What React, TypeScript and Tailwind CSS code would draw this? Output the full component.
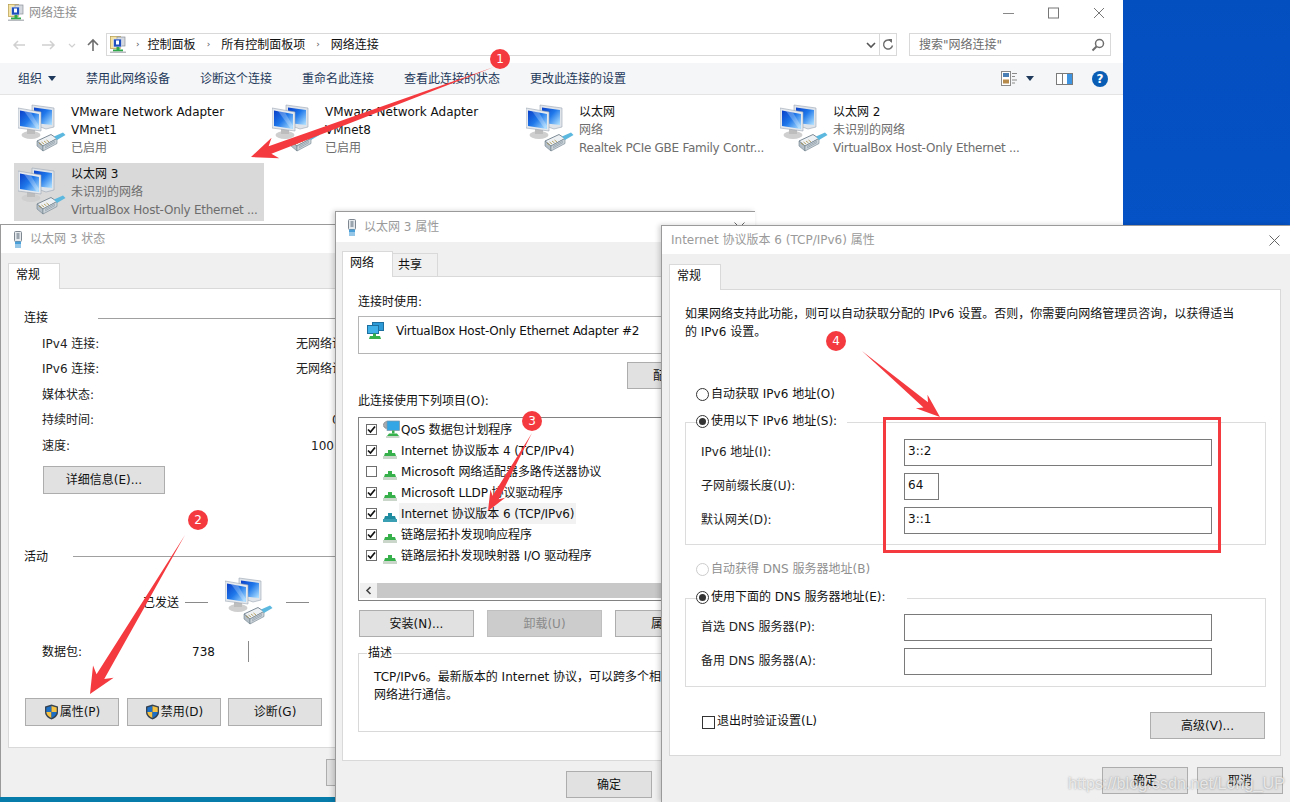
import React from "react";

type P = [number, number];

function arrowPoints(tail: P, tip: P, shaft: number, headW: number, headL: number) {
  const dx = tip[0] - tail[0];
  const dy = tip[1] - tail[1];
  const len = Math.hypot(dx, dy);
  const ux = dx / len;
  const uy = dy / len;
  const nx = -uy;
  const ny = ux;
  const at = (back: number, off: number): string =>
    `${tip[0] - ux * back + nx * off},${tip[1] - uy * back + ny * off}`;
  return [
    `${tail[0]},${tail[1]}`,
    at(headL * 0.78, shaft / 2),
    at(headL, headW / 2),
    `${tip[0]},${tip[1]}`,
    at(headL, -headW / 2),
    at(headL * 0.78, -shaft / 2),
  ].join(" ");
}

function NetIcon({ size = 48 }: { size?: number }) {
  return (
    <svg width={size} height={size} viewBox="0 0 48 48" className="shrink-0">
      <defs>
        <linearGradient id="scr" x1="0" y1="0" x2="1" y2="0.9">
          <stop offset="0" stopColor="#0a3fc8" />
          <stop offset="0.5" stopColor="#1f78ea" />
          <stop offset="1" stopColor="#a8dcff" />
        </linearGradient>
      </defs>
      <path d="M14 1 L36 4 L36 23 L28 25 L14 20 Z" fill="#dfe4ea" stroke="#9aa5b1" strokeWidth="0.6" />
      <path d="M16 3.5 L34 6 L34 21 L16 19 Z" fill="url(#scr)" />
      <ellipse cx="13" cy="31" rx="9.5" ry="4" fill="#cfcfcf" />
      <rect x="9" y="25" width="8" height="5" fill="#bdbdbd" />
      <path d="M0 4 L23 8 L23 27 L0 24 Z" fill="#e6eaee" stroke="#9aa5b1" strokeWidth="0.6" />
      <path d="M2 6.5 L21 10 L21 25 L2 22 Z" fill="url(#scr)" />
      <path d="M6 7 L13 8.5 L21 22 L19 25 Z" fill="#ffffff" opacity="0.25" />
      <path d="M19 37 L33 30.5 L39 34.5 L25 42 Z" fill="#eef1f3" stroke="#6f7f8b" strokeWidth="0.9" />
      <path d="M19 37 L19 42 L25 47 L25 42 Z" fill="#b4bec6" stroke="#6f7f8b" strokeWidth="0.6" />
      <path d="M25 42 L25 47 L39 39.5 L39 34.5 Z" fill="#ccd4da" stroke="#6f7f8b" strokeWidth="0.6" />
      <path d="M27 44 L37 38.5 M27 42.5 L37 37" stroke="#8a98a3" strokeWidth="0.7" />
      <path d="M21 39 L23.5 41 M23.5 38 L26 40 M26 37 L28.5 39 M28.5 36 L31 38" stroke="#a88f45" strokeWidth="0.8" />
      <path d="M36 32.5 L45 28.5 L47.5 31 L39 36 Z" fill="#5cb8de" />
    </svg>
  );
}

function PlugIcon() {
  return (
    <svg width="10" height="17" viewBox="0 0 10 17" className="shrink-0">
      <rect x="1.5" y="0.5" width="7" height="10" rx="1" fill="#e6e9ec" stroke="#7e8790" />
      <rect x="3.5" y="2" width="3" height="6" fill="#9aa4ad" />
      <rect x="2" y="10.5" width="6" height="2.5" fill="#49a0d8" />
      <path d="M3 13 V17 M5 13 V17 M7 13 V17" stroke="#2f8ed0" strokeWidth="1" />
    </svg>
  );
}

function FolderNetIcon() {
  return (
    <svg width="16" height="17" viewBox="0 0 16 17" className="shrink-0">
      <rect x="0.5" y="0.5" width="10" height="12" fill="#f4e3a3" stroke="#b59b4a" strokeWidth="0.7" />
      <rect x="7" y="1" width="8" height="9" fill="#d5d9df" stroke="#8a8f98" strokeWidth="0.7" />
      <rect x="3.5" y="3" width="8" height="8" fill="#1f4fbf" stroke="#dfe5ee" strokeWidth="0.7" />
      <rect x="6" y="4.5" width="3" height="4" fill="#ffffff" />
      <rect x="6.5" y="11" width="3" height="3" fill="#2fa84a" />
      <rect x="3" y="13.5" width="10" height="2" fill="#2fa84a" />
      <rect x="0" y="15.5" width="16" height="1.5" fill="#b8bcc0" />
    </svg>
  );
}

function Shield() {
  return (
    <svg width="15" height="16" viewBox="0 0 15 16" className="shrink-0">
      <path d="M7.5 0.5 L14 2.5 V8 C14 12 10.5 14.5 7.5 15.5 C4.5 14.5 1 12 1 8 V2.5 Z" fill="#36424f" />
      <path d="M7.5 2 L2.3 3.5 V8 H7.5 Z" fill="#1c6fc4" />
      <path d="M7.5 2 L12.7 3.5 V8 H7.5 Z" fill="#f6c244" />
      <path d="M2.3 8 C2.5 11 5 13 7.5 14 V8 Z" fill="#f6c244" />
      <path d="M12.7 8 C12.5 11 10 13 7.5 14 V8 Z" fill="#1c6fc4" />
    </svg>
  );
}

function ProtoIcon({ teal = false }: { teal?: boolean }) {
  const main = teal ? "#1f8ca0" : "#35b04a";
  return (
    <svg width="14" height="9" viewBox="0 0 14 9" className="shrink-0 mt-[7px]">
      <path d="M5 0 H9 V3 H12 L13 6 H1 L2 3 H5 Z" fill={main} />
      <rect x="0" y="6" width="14" height="3" fill={teal ? "#3b9fb3" : "#c9d6c9"} />
    </svg>
  );
}

function QosIcon() {
  return (
    <svg width="17" height="19" viewBox="0 0 17 19" className="shrink-0">
      <circle cx="4" cy="5" r="3.5" fill="#a8adb2" stroke="#7c8186" strokeDasharray="1.4 0.8" />
      <rect x="4" y="1" width="12.5" height="9.5" fill="#33a6e6" stroke="#7d94a6" strokeWidth="0.7" />
      <rect x="9" y="10.5" width="2.5" height="3" fill="#35b04a" />
      <path d="M4 16 L6 13.5 H14 L16 16 Z" fill="#35b04a" />
      <rect x="3" y="16" width="13.5" height="2" fill="#c9d6c9" />
    </svg>
  );
}

function AdapterIcon() {
  return (
    <svg width="17" height="17" viewBox="0 0 17 17" className="shrink-0">
      <rect x="5.5" y="0.5" width="11" height="8" fill="#2c9ad6" stroke="#1c6f9f" />
      <rect x="0.5" y="3.5" width="11" height="8" fill="#3fb0e8" stroke="#1c6f9f" />
      <rect x="6" y="11.5" width="3" height="2.5" fill="#35b04a" />
      <path d="M2 17 L3 14 H13 L14 17 Z" fill="#35b04a" />
    </svg>
  );
}

function Check({ on = true }: { on?: boolean }) {
  return (
    <div className="w-[11px] h-[11px] border border-[#6e6e6e] bg-white shrink-0 flex items-center justify-center">
      {on && (
        <svg width="9" height="9" viewBox="0 0 9 9">
          <path d="M1 4.5 L3.5 7 L8 1.5" fill="none" stroke="#111" strokeWidth="1.7" />
        </svg>
      )}
    </div>
  );
}

function Radio({ on = false, dim = false }: { on?: boolean; dim?: boolean }) {
  return (
    <div
      className={`w-[13px] h-[13px] rounded-full border bg-white shrink-0 flex items-center justify-center ${
        dim ? "border-[#cccccc]" : "border-[#333333]"
      }`}
    >
      {on && <div className="w-[7px] h-[7px] rounded-full bg-[#333333]" />}
    </div>
  );
}

function Btn({
  w,
  h = 27,
  disabled = false,
  className = "",
  children,
}: {
  w: string;
  h?: number;
  disabled?: boolean;
  className?: string;
  children: React.ReactNode;
}) {
  return (
    <div
      style={{ height: h }}
      className={`${w} shrink-0 flex items-center justify-center gap-[1px] border whitespace-nowrap ${
        disabled ? "bg-[#cccccc] border-[#bfbfbf] text-[#8a8a8a]" : "bg-[#e1e1e1] border-[#adadad] text-[#111111]"
      } ${className}`}
    >
      {children}
    </div>
  );
}

function TitleBar({ h, children }: { h: string; children: React.ReactNode }) {
  return <div className={`${h} bg-white flex items-center text-[#9a9a9a]`}>{children}</div>;
}

function Tab({ active = false, w, children }: { active?: boolean; w: string; children: React.ReactNode }) {
  return (
    <div
      className={`${w} flex items-center border border-b-0 border-[#d9d9d9] ${
        active ? "h-[26px] bg-white -mb-px pl-[7px] pb-[3px] relative z-10" : "h-[23px] bg-[#f0f0f0] pl-[5px] border-l-0"
      }`}
    >
      {children}
    </div>
  );
}

function ExplorerItem({
  title,
  l2,
  l3,
  selected = false,
}: {
  title: string[];
  l2: string;
  l3?: string;
  selected?: boolean;
}) {
  return (
    <div className={`h-[58px] flex pl-[4px] ${selected ? "bg-[#d9d9d9]" : ""}`}>
      <div className="pt-[4px]">
        <NetIcon />
      </div>
      <div className={`pl-[5px] leading-[18px] whitespace-nowrap ${selected ? "pt-[2px]" : "pt-[3px]"}`}>
        {title.map((t) => (
          <div key={t} className="text-[#111111]">
            {t}
          </div>
        ))}
        <div className="text-[#6d6d6d]">{l2}</div>
        {l3 && <div className="text-[#6d6d6d] tracking-[-0.27px]">{l3}</div>}
      </div>
    </div>
  );
}

function StatRow({ label, value, w }: { label: string; value?: string; w?: string }) {
  return (
    <div className="h-[25.5px] flex items-center whitespace-nowrap text-[#222222]">
      <div className={`${w ?? "w-[254px]"} shrink-0`}>{label}</div>
      {value && <div className="shrink-0">{value}</div>}
    </div>
  );
}

function ProtoRow({
  label,
  on = true,
  icon,
  sel = false,
}: {
  label: string;
  on?: boolean;
  icon: React.ReactNode;
  sel?: boolean;
}) {
  return (
    <div className="h-[21px] flex items-center pl-[7px] whitespace-nowrap">
      <Check on={on} />
      <div className="w-[24px] pl-[6px] flex justify-start shrink-0">{icon}</div>
      <div className={`h-[21px] flex items-center pl-[2px] pr-[2px] -ml-[2px] tracking-[-0.1px] ${sel ? "bg-[#f2f2f2]" : ""}`}>
        {label}
      </div>
    </div>
  );
}

function Field({ label, value, w = "w-[308px]" }: { label: string; value?: string; w?: string }) {
  return (
    <div className="h-[27px] flex items-center whitespace-nowrap">
      <div className="w-[218px] shrink-0 pl-[15px] pb-[2px] text-[#222222]">{label}</div>
      <div className={`${w} h-[27px] border border-[#7a7a7a] bg-white flex items-center pl-[3px] pb-[3px]`}>
        {value}
      </div>
    </div>
  );
}

export default function App() {
  const arrows: { tail: P; tip: P; shaft: number; headW: number; headL: number }[] = [
    { tail: [494, 67], tip: [251, 157], shaft: 8, headW: 22, headL: 26 },
    { tail: [185, 535], tip: [90, 694], shaft: 9, headW: 24, headL: 26 },
    { tail: [532, 433], tip: [488, 511], shaft: 7, headW: 17, headL: 20 },
    { tail: [862, 351], tip: [940, 417], shaft: 7, headW: 18, headL: 24 },
  ];
  const badges: { x: string; n: string }[] = [
    { x: "left-[490px] top-[49px]", n: "1" },
    { x: "left-[188px] top-[510px]", n: "2" },
    { x: "left-[522px] top-[411px]", n: "3" },
    { x: "left-[826px] top-[331px]", n: "4" },
  ];

  return (
    <div className="relative w-[1290px] h-[802px] overflow-hidden bg-gradient-to-b from-[#044fc0] to-[#0559d2] text-[12px] text-[#111111] font-['DejaVu_Sans','Noto_Sans_CJK_SC',sans-serif]">
      {/* lower-left desktop */}
      <div className="absolute left-0 top-[630px] w-[340px] h-[172px] bg-[#067cab]" />

      {/* Explorer window */}
      <div className="absolute left-0 top-0 w-[1123px] h-[225px] bg-white overflow-hidden flex flex-col">
        <div className="h-[25px] flex items-center pl-[8px] shrink-0">
          <FolderNetIcon />
          <span className="ml-[5px] text-[#8f8f8f]">网络连接</span>
          <div className="ml-auto flex items-center pr-[18px]">
            <svg width="102" height="12" viewBox="0 0 102 12">
              <path d="M0 6.5 H11" stroke="#888" />
              <rect x="45.5" y="1" width="10" height="10" fill="none" stroke="#777" />
              <path d="M91 1 L101 11 M101 1 L91 11" stroke="#777" />
            </svg>
          </div>
        </div>
        <div className="h-[23px] mt-[8px] flex items-center shrink-0">
          <div className="w-[106px] pl-[12px] flex shrink-0">
            <svg width="90" height="16" viewBox="0 0 90 16">
              <path d="M13 8 H2 M6 4 L2 8 L6 12" fill="none" stroke="#d0d0d0" strokeWidth="1.5" />
              <path d="M30 8 H42 M38 4 L42 8 L38 12" fill="none" stroke="#d0d0d0" strokeWidth="1.5" />
              <path d="M57 7 L60 10 L63 7" fill="none" stroke="#d0d0d0" strokeWidth="1.2" />
              <path d="M81 14 V3 M76 8 L81 3 L86 8" fill="none" stroke="#6d6d6d" strokeWidth="1.6" />
            </svg>
          </div>
          <div className="w-[791px] h-[23px] border border-[#d9d9d9] flex items-center shrink-0">
            <div className="pl-[3px] flex">
              <FolderNetIcon />
            </div>
            <span className="ml-[10px] mr-[8px] text-[9px] text-[#555555]">›</span>
            <span>控制面板</span>
            <span className="mx-[11px] text-[9px] text-[#555555]">›</span>
            <span>所有控制面板项</span>
            <span className="mx-[11px] text-[9px] text-[#555555]">›</span>
            <span>网络连接</span>
            <div className="ml-auto flex items-center h-full">
              <svg width="12" height="8" viewBox="0 0 12 8" className="mr-[2px]">
                <path d="M2 2 L6 6 L10 2" fill="none" stroke="#555" strokeWidth="1.6" />
              </svg>
              <div className="w-[17px] h-full border-l border-[#d9d9d9] flex items-center justify-center">
                <svg width="12" height="13" viewBox="0 0 12 13">
                  <path d="M9.5 3.5 A4.5 4.5 0 1 0 10.5 7.5" fill="none" stroke="#6d6d6d" strokeWidth="1.4" />
                  <path d="M6 1 L10 1 L10 5 Z" fill="#6d6d6d" />
                </svg>
              </div>
            </div>
          </div>
          <div className="ml-[12px] w-[202px] h-[23px] border border-[#d9d9d9] flex items-center pl-[9px] pr-[5px] text-[#6d6d6d] shrink-0">
            <span>搜索"网络连接"</span>
            <svg width="14" height="14" viewBox="0 0 14 14" className="ml-auto">
              <circle cx="8.5" cy="5.5" r="4" fill="none" stroke="#6d6d6d" strokeWidth="1.5" />
              <path d="M5.5 8.5 L1.5 12.5" stroke="#6d6d6d" strokeWidth="2" />
            </svg>
          </div>
        </div>
        <div className="h-[32px] mt-[7px] bg-[#f5f6f7] border-b border-[#e4e4e4] flex items-center pl-[18px] text-[#1e395b] whitespace-nowrap shrink-0">
          <span>组织</span>
          <svg width="8" height="5" viewBox="0 0 8 5" className="ml-[6px]">
            <path d="M0 0 H8 L4 5 Z" fill="#1e395b" />
          </svg>
          <span className="ml-[30px]">禁用此网络设备</span>
          <span className="ml-[30px]">诊断这个连接</span>
          <span className="ml-[30px]">重命名此连接</span>
          <span className="ml-[30px]">查看此连接的状态</span>
          <span className="ml-[30px]">更改此连接的设置</span>
          <div className="ml-auto flex items-center pr-[15px]">
            <svg width="16" height="15" viewBox="0 0 16 15">
              <rect x="0.5" y="0.5" width="9" height="14" fill="#fff" stroke="#8a8a8a" />
              <rect x="2" y="2" width="6" height="4" fill="#4a7fb5" />
              <rect x="2" y="8.5" width="6" height="4" fill="#b58a4a" />
              <path d="M11 2.5 H16 M11 5.5 H14 M11 9 H16 M11 12 H14" stroke="#8a8a8a" />
            </svg>
            <svg width="8" height="5" viewBox="0 0 8 5" className="ml-[9px]">
              <path d="M0 0 H8 L4 5 Z" fill="#1e395b" />
            </svg>
            <svg width="17" height="12" viewBox="0 0 17 12" className="ml-[22px]">
              <rect x="0.5" y="0.5" width="16" height="11" fill="#fff" stroke="#7a7a7a" />
              <rect x="6" y="1" width="1" height="10" fill="#7a7a7a" />
              <rect x="11" y="1" width="5" height="10" fill="#3e94e0" />
            </svg>
            <div className="ml-[19px] w-[16px] h-[16px] rounded-full bg-[#0a5db5] text-white font-bold text-[12px] leading-none flex items-center justify-center">
              ?
            </div>
          </div>
        </div>
        <div className="pt-[5px] pl-[14px] grid grid-cols-[250px_250px_250px_250px] gap-x-[4px] gap-y-[5px]">
          <ExplorerItem title={["VMware Network Adapter", "VMnet1"]} l2="已启用" />
          <ExplorerItem title={["VMware Network Adapter", "VMnet8"]} l2="已启用" />
          <ExplorerItem title={["以太网"]} l2="网络" l3="Realtek PCIe GBE Family Contr..." />
          <ExplorerItem title={["以太网 2"]} l2="未识别的网络" l3="VirtualBox Host-Only Ethernet ..." />
          <ExplorerItem title={["以太网 3"]} l2="未识别的网络" l3="VirtualBox Host-Only Ethernet ..." selected />
        </div>
      </div>

      {/* Status window */}
      <div className="absolute left-0 top-[224px] w-[336px] h-[573px] bg-[#f0f0f0] border-t border-l border-[#9a9a9a] overflow-hidden flex flex-col">
        <TitleBar h="h-[28px] shrink-0">
          <div className="ml-[12px] mr-[7px] flex">
            <PlugIcon />
          </div>
          <span>以太网 3 状态</span>
        </TitleBar>
        <div className="pt-[10px] pl-[7px] flex shrink-0">
          <Tab active w="w-[52px]">
            常规
          </Tab>
        </div>
        <div className="ml-[7px] w-[360px] h-[460px] bg-white border border-[#d9d9d9] shrink-0 pl-[15px]">
          <div className="mt-[20px] h-[18px] flex items-center">
            <span className="w-[74px] shrink-0">连接</span>
            <div className="flex-1 h-px bg-[#a0a0a0]" />
          </div>
          <div className="mt-[4px] pl-[18px]">
            <StatRow label="IPv4 连接:" value="无网络访问权限" />
            <StatRow label="IPv6 连接:" value="无网络访问权限" />
            <StatRow label="媒体状态:" />
            <StatRow label="持续时间:" value="00:08:12" w="w-[290px]" />
            <StatRow label="速度:" value="100.0 Mbps" w="w-[269px]" />
            <Btn w="w-[122px]" h={28} className="mt-[7px] ml-[1px]">
              详细信息(E)...
            </Btn>
          </div>
          <div className="mt-[54px] h-[18px] flex items-center">
            <span className="w-[49px] shrink-0">活动</span>
            <div className="flex-1 h-px bg-[#a0a0a0]" />
          </div>
          <div className="pl-[119px] mt-[11px] flex items-center h-[48px]">
            <span className="w-[42px] shrink-0 pt-[4px]">已发送</span>
            <div className="w-[23px] h-px bg-[#8a8a8a] mt-[4px]" />
            <div className="ml-[17px]">
              <NetIcon />
            </div>
            <div className="ml-[13px] w-[23px] h-px bg-[#8a8a8a] mt-[4px]" />
          </div>
          <div className="pl-[18px] mt-[15px] flex items-center h-[24px]">
            <span className="w-[150px] shrink-0">数据包:</span>
            <span className="w-[56px] shrink-0">738</span>
            <div className="w-px h-[21px] bg-[#8a8a8a]" />
          </div>
          <div className="mt-[34px] flex gap-[8px] pl-[1px]">
            <Btn w="w-[94px]" h={28}>
              <Shield />
              属性(P)
            </Btn>
            <Btn w="w-[94px]" h={28}>
              <Shield />
              禁用(D)
            </Btn>
            <Btn w="w-[94px]" h={28} className="-ml-[1px]">
              诊断(G)
            </Btn>
          </div>
        </div>
        <div className="flex justify-end mt-[11px]">
          <div className="w-[10px] h-[27px] bg-[#e1e1e1] border border-[#adadad]" />
        </div>
      </div>

      {/* Properties window */}
      <div className="absolute left-[335px] top-[211px] w-[420px] h-[591px] bg-[#f0f0f0] border-t border-l border-[#9a9a9a] shadow-[-2px_0_5px_rgba(0,0,0,0.18)] flex flex-col overflow-hidden">
        <div className="h-[30px] bg-white flex items-center text-[#9a9a9a] shrink-0">
          <div className="ml-[11px] mr-[7px] flex">
            <PlugIcon />
          </div>
          <span>以太网 3 属性</span>
          <svg width="11" height="11" viewBox="0 0 11 11" className="ml-auto mr-[10px]">
            <path d="M0.5 0.5 L10.5 10.5 M10.5 0.5 L0.5 10.5" stroke="#666" />
          </svg>
        </div>
        <div className="pt-[9px] pl-[6px] flex items-end shrink-0 h-[34px]">
          <Tab active w="w-[51px]">
            网络
          </Tab>
          <Tab w="w-[45px]">共享</Tab>
        </div>
        <div className="ml-[6px] w-[500px] h-[485px] bg-white border border-[#d9d9d9] shrink-0 pl-[15px]">
          <div className="mt-[16px] h-[18px] leading-[18px]">连接时使用:</div>
          <div className="mt-[5px] w-[400px] h-[38px] border border-[#b5b5b5] flex items-start pt-[5px] pl-[8px]">
            <AdapterIcon />
            <span className="ml-[12px] leading-[18px] tracking-[-0.25px] whitespace-nowrap">
              VirtualBox Host-Only Ethernet Adapter #2
            </span>
          </div>
          <div className="mt-[8px] pl-[269px]">
            <Btn w="w-[114px]" className="!justify-start pl-[25px]">
              配置(C)...
            </Btn>
          </div>
          <div className="mt-[3px] h-[18px] leading-[18px]">此连接使用下列项目(O):</div>
          <div className="mt-[7px] w-[400px] h-[184px] border border-[#828282] pt-[1px] flex flex-col">
            <ProtoRow label="QoS 数据包计划程序" icon={<QosIcon />} />
            <ProtoRow label="Internet 协议版本 4 (TCP/IPv4)" icon={<ProtoIcon />} />
            <ProtoRow label="Microsoft 网络适配器多路传送器协议" on={false} icon={<ProtoIcon />} />
            <ProtoRow label="Microsoft LLDP 协议驱动程序" icon={<ProtoIcon />} />
            <ProtoRow label="Internet 协议版本 6 (TCP/IPv6)" icon={<ProtoIcon teal />} sel />
            <ProtoRow label="链路层拓扑发现响应程序" icon={<ProtoIcon />} />
            <ProtoRow label="链路层拓扑发现映射器 I/O 驱动程序" icon={<ProtoIcon />} />
            <div className="mt-auto mb-[2px] mx-[1px] h-[15px] bg-[#c8c8c8] flex">
              <div className="w-[17px] h-full bg-[#f0f0f0] flex items-center justify-center">
                <svg width="7" height="9" viewBox="0 0 7 9">
                  <path d="M5.5 1 L2 4.5 L5.5 8" fill="none" stroke="#444" strokeWidth="1.6" />
                </svg>
              </div>
            </div>
          </div>
          <div className="mt-[9px] flex gap-[13px] pl-[1px]">
            <Btn w="w-[115px]">安装(N)...</Btn>
            <Btn w="w-[115px]" disabled>
              卸载(U)
            </Btn>
            <Btn w="w-[115px]" className="!justify-start pl-[35px]">
              属性(R)
            </Btn>
          </div>
          <div className="mt-[16px] w-[400px] h-[79px] border border-[#d9d9d9] pl-[15px]">
            <div className="-mt-[9px] -ml-[7px] w-fit bg-white px-[1px] leading-[16px]">描述</div>
            <div className="mt-[7px] leading-[18px] whitespace-nowrap">
              <div>TCP/IPv6。最新版本的 Internet 协议，可以跨多个相互连接的</div>
              <div>网络进行通信。</div>
            </div>
          </div>
        </div>
        <div className="pl-[230px] mt-[10px] flex gap-[9px] shrink-0">
          <Btn w="w-[86px]">确定</Btn>
        </div>
      </div>

      {/* IPv6 window */}
      <div className="absolute left-[661px] top-[225px] w-[629px] h-[577px] bg-[#f0f0f0] border-t border-l border-[#9a9a9a] shadow-[-2px_0_5px_rgba(0,0,0,0.18)] flex flex-col">
        <div className="h-[28px] bg-white flex items-center text-[#9a9a9a] shrink-0 pl-[9px]">
          <span>Internet 协议版本 6 (TCP/IPv6) 属性</span>
          <svg width="11" height="11" viewBox="0 0 11 11" className="ml-auto mr-[10px]">
            <path d="M0.5 0.5 L10.5 10.5 M10.5 0.5 L0.5 10.5" stroke="#666" />
          </svg>
        </div>
        <div className="pt-[10px] pl-[7px] flex shrink-0">
          <Tab active w="w-[52px]">
            常规
          </Tab>
        </div>
        <div className="ml-[7px] w-[612px] h-[467px] bg-white border border-[#d9d9d9] shrink-0 px-[15px]">
          <div className="pt-[15px] leading-[18px] whitespace-nowrap">
            <div>如果网络支持此功能，则可以自动获取分配的 IPv6 设置。否则，你需要向网络管理员咨询，以获得适当</div>
            <div>的 IPv6 设置。</div>
          </div>
          <div className="mt-[44px] h-[18px] flex items-center pl-[11px] gap-[2px]">
            <Radio />
            <span>自动获取 IPv6 地址(O)</span>
          </div>
          <div className="mt-[19px] w-[581px] h-[123px] border border-[#dcdcdc]">
            <div className="-mt-[11px] ml-[10px] w-fit h-[18px] flex items-center gap-[2px] bg-white pr-[10px]">
              <Radio on />
              <span>使用以下 IPv6 地址(S):</span>
            </div>
            <div className="mt-[9px] flex flex-col gap-[7px]">
              <Field label="IPv6 地址(I):" value="3::2" />
              <Field label="子网前缀长度(U):" value="64" w="w-[35px]" />
              <Field label="默认网关(D):" value="3::1" />
            </div>
          </div>
          <div className="mt-[15px] h-[18px] flex items-center pl-[11px] gap-[2px] text-[#8f8f8f]">
            <Radio dim />
            <span>自动获得 DNS 服务器地址(B)</span>
          </div>
          <div className="mt-[20px] w-[581px] h-[89px] border border-[#dcdcdc]">
            <div className="-mt-[11px] ml-[10px] w-fit h-[18px] flex items-center gap-[2px] bg-white pr-[22px]">
              <Radio on />
              <span>使用下面的 DNS 服务器地址(E):</span>
            </div>
            <div className="mt-[8px] flex flex-col gap-[7px]">
              <Field label="首选 DNS 服务器(P):" />
              <Field label="备用 DNS 服务器(A):" />
            </div>
          </div>
          <div className="mt-[25px] flex items-start pl-[17px] pr-0 w-[580px]">
            <div className="w-[13px] h-[13px] border border-[#333333] bg-white shrink-0 mt-[4px]" />
            <span className="ml-[2px] leading-[18px]">退出时验证设置(L)</span>
            <Btn w="w-[115px]" className="ml-auto">
              高级(V)...
            </Btn>
          </div>
        </div>
        <div className="mt-[11px] flex pl-[440px] gap-[9px]">
          <Btn w="w-[86px]">确定</Btn>
          <Btn w="w-[86px]">取消</Btn>
        </div>
      </div>

      {/* Annotations */}
      <div className="absolute left-[883px] top-[417px] w-[338px] h-[136px] border-[3px] border-[#f53a3f]" />
      <svg className="absolute left-0 top-0" width="1290" height="802" viewBox="0 0 1290 802">
        {arrows.map((a, i) => (
          <polygon key={i} points={arrowPoints(a.tail, a.tip, a.shaft, a.headW, a.headL)} fill="#f53a3f" />
        ))}
      </svg>
      {badges.map((b) => (
        <div
          key={b.n}
          className={`absolute ${b.x} w-[20px] h-[20px] rounded-full bg-[#f53a3f] text-white text-[12px] flex items-center justify-center`}
        >
          {b.n}
        </div>
      ))}
      <div className="absolute left-[1068px] top-[772px] text-[16.2px] leading-[22px] text-white/70 whitespace-nowrap font-['Liberation_Sans',sans-serif] [text-shadow:0_0_2px_rgba(90,90,90,0.6)]">
        https://blog.csdn.net/Long_UP
      </div>
    </div>
  );
}
